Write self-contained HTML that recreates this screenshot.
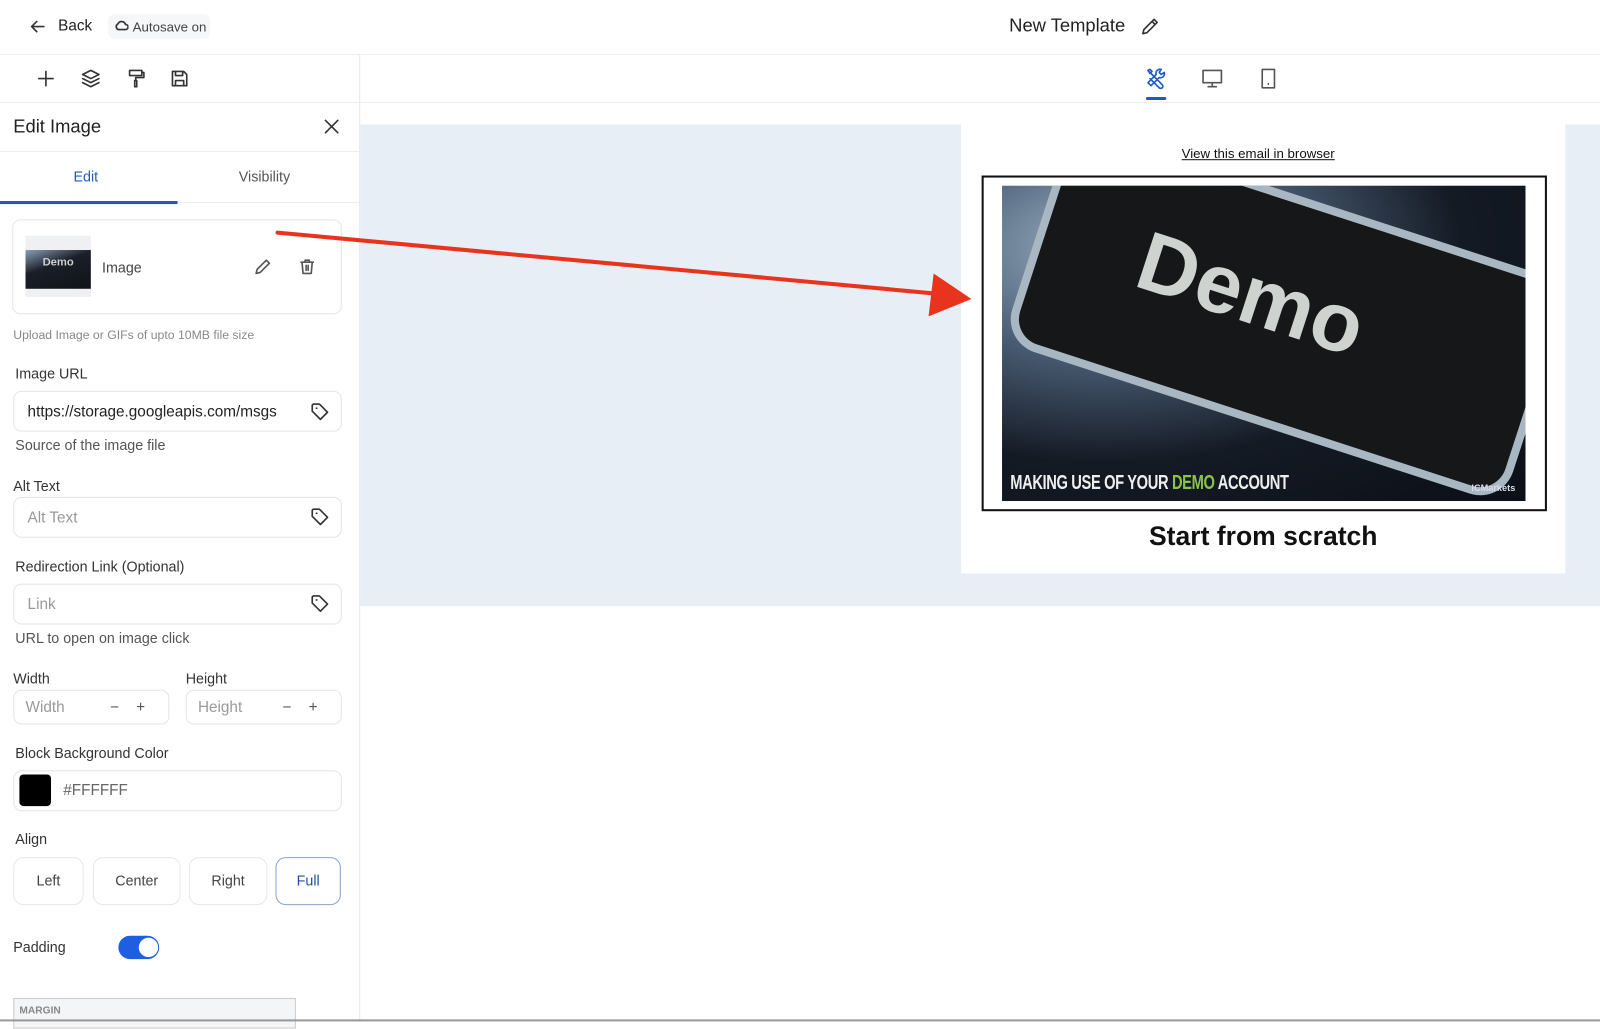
<!DOCTYPE html>
<html><head><meta charset="utf-8"><style>
*{box-sizing:border-box;margin:0;padding:0}
html,body{width:1600px;height:1021px;overflow:hidden;background:#fff}
body{font-family:"Liberation Sans",sans-serif;color:#222}
#w{position:absolute;left:0;top:0;width:1568px;height:1001px;transform:scale(1.0204);transform-origin:0 0}
.a{position:absolute}
.inp{position:absolute;left:13px;width:322px;height:40px;border:1px solid #e3e5e8;border-radius:8px;font-size:15px;color:#999;padding:11px 13px}
.lbl{position:absolute;font-size:14px;color:#333}
.hint{position:absolute;font-size:14px;color:#555}
.btn{position:absolute;top:840px;height:47px;border:1px solid #e6e7ea;border-radius:10px;font-size:14px;color:#444;text-align:center;line-height:45px}
svg{position:absolute;fill:none;stroke:#333;stroke-width:1.6;stroke-linecap:round;stroke-linejoin:round}
</style></head><body><div id="w">
<svg style="left:29px;top:18px" width="16" height="16" viewBox="0 0 16 16"><path d="M14 8H2M7 3L2 8l5 5"/></svg>
<div class="a" style="left:57px;top:17px;font-size:15px;color:#222">Back</div>
<div class="a" style="left:106px;top:14px;width:100px;height:24px;background:#f6f7f8;border-radius:6px"></div>
<svg style="left:112px;top:19px" width="14" height="12" viewBox="0 0 14 12" stroke-width="1.3"><path d="M4 10h7a2.5 2.5 0 0 0 0-5 4 4 0 0 0-7.5-.5A3 3 0 0 0 4 10z"/></svg>
<div class="a" style="left:130px;top:19px;font-size:13px;color:#444">Autosave on</div>
<div class="a" style="left:989px;top:15px;font-size:18px;color:#222">New Template</div>
<svg style="left:1117px;top:16px" width="20" height="20" viewBox="0 0 20 20"><path d="M3 17l1-4L14 3l3 3L7 16z M12 5l3 3"/></svg>
<div class="a" style="left:0;top:53px;width:1568px;height:1px;background:#eceef0"></div>
<svg style="left:37px;top:69px" width="16" height="16" viewBox="0 0 16 16" stroke-width="1.8"><path d="M8 1v14M1 8h14"/></svg>
<svg style="left:79px;top:67px" width="20" height="20" viewBox="0 0 20 20"><path d="M10 2l8 4-8 4-8-4z M2 10l8 4 8-4 M2 14l8 4 8-4"/></svg>
<svg style="left:124px;top:67px" width="20" height="20" viewBox="0 0 20 20"><path d="M3 2h12v5H3z M15 4h2v5H9v3 M8 12h2v6H8z"/></svg>
<svg style="left:166px;top:67px" width="20" height="20" viewBox="0 0 20 20"><path d="M3 3h11l3 3v11H3z M6 3v4h7V3 M6 17v-5h8v5"/></svg>
<div class="a" style="left:352px;top:54px;width:1px;height:947px;background:#e6e8ea"></div>
<div class="a" style="left:0;top:100px;width:1568px;height:1px;background:#eceef0"></div>
<svg style="left:1122px;top:66px;stroke:#1d5bbf" width="22" height="22" viewBox="0 0 22 22"><path d="M3 3l5 5 M3 3l2-1 2 2-2 2z M8 8l9 9a2 2 0 0 1-3 3l-9-9 M16 2a4 4 0 0 0-5 5L3 15l3 3 8-8a4 4 0 0 0 5-5l-3 2-2-2z"/></svg>
<div class="a" style="left:1123px;top:95px;width:20px;height:3px;background:#1d5bbf;border-radius:2px"></div>
<svg style="left:1177px;top:67px;stroke:#555" width="22" height="20" viewBox="0 0 22 20"><path d="M2 2h18v12H2z M11 14v4 M7 18h8"/></svg>
<svg style="left:1235px;top:66px;stroke:#555" width="16" height="22" viewBox="0 0 16 22"><path d="M2 2h12v18H2z M8 16v.5"/></svg>
<div class="a" style="left:13px;top:114px;font-size:18px;color:#222">Edit Image</div>
<svg style="left:318px;top:117px" width="14" height="14" viewBox="0 0 14 14" stroke-width="1.8"><path d="M1 1l12 12M13 1L1 13"/></svg>
<div class="a" style="left:0;top:148px;width:352px;height:1px;background:#eceef0"></div>
<div class="a" style="left:72px;top:165px;font-size:14px;color:#1d5bbf">Edit</div>
<div class="a" style="left:234px;top:165px;font-size:14px;color:#555">Visibility</div>
<div class="a" style="left:0;top:198px;width:352px;height:1px;background:#eceef0"></div>
<div class="a" style="left:0;top:197px;width:174px;height:3px;background:#1d5bbf"></div>
<div class="a" style="left:12px;top:215px;width:323px;height:93px;border:1px solid #e3e5e8;border-radius:8px"></div>
<div class="a" style="left:25px;top:231px;width:64px;height:60px;background:#eef0f3"></div>
<div class="a" style="left:25px;top:245px;width:64px;height:38px;background:linear-gradient(160deg,#8aa0b8,#1a1f28 40%,#0e1218);color:#ccc;font-size:11px;font-weight:bold;text-align:center;line-height:24px">Demo</div>
<div class="a" style="left:100px;top:254px;font-size:14px;color:#444">Image</div>
<svg style="left:249px;top:253px;stroke:#555" width="17" height="17" viewBox="0 0 17 17" stroke-width="1.4"><path d="M2 15l1-4 9-9 3 3-9 9z"/></svg>
<svg style="left:293px;top:253px;stroke:#555" width="16" height="17" viewBox="0 0 16 17" stroke-width="1.4"><path d="M2 4h12 M6 4V2h4v2 M3 4l1 11h8l1-11 M7 7v5 M9 7v5"/></svg>
<div class="a" style="left:13px;top:321px;font-size:12px;color:#888">Upload Image or GIFs of upto 10MB file size</div>
<div class="lbl" style="left:15px;top:358px">Image URL</div>
<div class="inp" style="top:383px;color:#222">https://storage.googleapis.com/msgs</div>
<div class="hint" style="left:15px;top:428px">Source of the image file</div>
<div class="lbl" style="left:13px;top:468px">Alt Text</div>
<div class="inp" style="top:487px">Alt Text</div>
<div class="lbl" style="left:15px;top:547px">Redirection Link (Optional)</div>
<div class="inp" style="top:572px">Link</div>
<div class="hint" style="left:15px;top:617px">URL to open on image click</div>
<svg style="left:304px;top:394px" width="19" height="19" viewBox="0 0 19 19"><path d="M2 3v6l8 8 7-7-8-8H3z M6 6h.5"/></svg>
<svg style="left:304px;top:497px" width="19" height="19" viewBox="0 0 19 19"><path d="M2 3v6l8 8 7-7-8-8H3z M6 6h.5"/></svg>
<svg style="left:304px;top:582px" width="19" height="19" viewBox="0 0 19 19"><path d="M2 3v6l8 8 7-7-8-8H3z M6 6h.5"/></svg>
<div class="lbl" style="left:13px;top:657px">Width</div>
<div class="lbl" style="left:182px;top:657px">Height</div>
<div class="inp" style="top:676px;width:153px;height:34px;padding:8px 11px">Width<span style="position:absolute;left:94px;color:#555">−&nbsp;&nbsp;&nbsp;&nbsp;+</span></div>
<div class="inp" style="top:676px;left:182px;width:153px;height:34px;padding:8px 11px">Height<span style="position:absolute;left:94px;color:#555">−&nbsp;&nbsp;&nbsp;&nbsp;+</span></div>
<div class="lbl" style="left:15px;top:730px">Block Background Color</div>
<div class="inp" style="top:755px;padding:10px 48px;color:#666">#FFFFFF</div>
<div class="a" style="left:19px;top:759px;width:31px;height:31px;background:#000;border-radius:4px"></div>
<div class="lbl" style="left:15px;top:814px">Align</div>
<div class="btn" style="left:13px;width:69px">Left</div>
<div class="btn" style="left:91px;width:86px">Center</div>
<div class="btn" style="left:185px;width:77px">Right</div>
<div class="btn" style="left:270px;width:64px;border-color:#8aa3c8;color:#1d4fa0">Full</div>
<div class="lbl" style="left:13px;top:920px">Padding</div>
<div class="a" style="left:116px;top:917px;width:40px;height:23px;background:#1d5fe0;border-radius:12px"></div>
<div class="a" style="left:136px;top:919px;width:19px;height:19px;background:#fff;border-radius:50%"></div>
<div class="a" style="left:13px;top:978px;width:277px;height:30px;border:1px solid #ccc;background:#f4f5f6;font-size:10px;font-weight:bold;color:#888;padding:6px 5px">MARGIN</div>
<div class="a" style="left:353px;top:122px;width:1215px;height:472px;background:#e7eef6"></div>
<div class="a" style="left:942px;top:122px;width:592px;height:440px;background:#fff"></div>
<div class="a" style="left:1158px;top:143px;font-size:13px;color:#111;text-decoration:underline">View this email in browser</div>
<div class="a" style="left:962px;top:172px;width:554px;height:329px;border:2px solid #111;background:#fff"></div>
<div class="a" style="left:982px;top:182px;width:513px;height:309px;background:radial-gradient(ellipse at 20% 20%,#9fb4c8 0,#4a5d75 30%,#141a24 60%,#0b0f16 100%);overflow:hidden">
 <div class="a" style="left:30px;top:20px;width:500px;height:210px;background:#161719;border-radius:26px;transform:rotate(18deg);box-shadow:0 0 0 8px #a9b7c2"></div>
 <div class="a" style="left:130px;top:60px;font-size:82px;font-weight:bold;color:#cfd3cf;transform:rotate(18deg)">Demo</div>
 <div class="a" style="left:8px;top:280px;font-size:20px;font-weight:bold;color:#eee;transform:scaleX(.72);transform-origin:left;letter-spacing:-.5px">MAKING USE OF YOUR <span style="color:#8bc34a">DEMO</span> ACCOUNT</div>
 <div class="a" style="left:460px;top:291px;font-size:9px;color:#dde;font-weight:bold">ICMarkets</div>
</div>
<div class="a" style="left:942px;top:510px;width:592px;text-align:center;font-size:26px;font-weight:bold;color:#111">Start from scratch</div>
<svg style="left:270px;top:220px;stroke:none" width="700" height="100" viewBox="0 0 700 100"><path d="M2 8L650 68" stroke="#e8341c" stroke-width="4"/><path d="M645 48L682 73 640 90z" fill="#e8341c"/></svg>
<div class="a" style="left:0;top:999px;width:1568px;height:2px;background:#999"></div>
</div></body></html>
